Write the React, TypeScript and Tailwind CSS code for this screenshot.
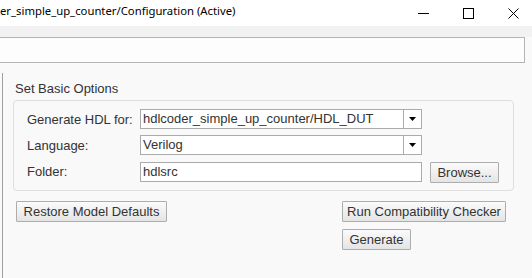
import React from 'react';

// --- Small building blocks ---

const Arrow: React.FC = () => (
  <svg width="7" height="4" viewBox="0 0 7 4" className="block">
    <path d="M0 0h7L3.5 4z" fill="#000" />
  </svg>
);

interface ComboProps {
  value: string;
}

const Combo: React.FC<ComboProps> = ({ value }) => (
  <div className="w-[282px] h-[20px] flex bg-white border border-[#ababab]">
    <div className="flex-1 pl-[2px] leading-[18px] whitespace-nowrap overflow-hidden">{value}</div>
    <div className="w-[18px] border-l border-[#ababab] flex items-center justify-center">
      <Arrow />
    </div>
  </div>
);

interface ButtonProps {
  label: string;
  width: string;
}

const Button: React.FC<ButtonProps> = ({ label, width }) => (
  <div
    className={`${width} h-[21px] flex items-center justify-center border border-[#adadad] rounded-[1px] bg-gradient-to-b from-[#fbfbfb] to-[#e4e4e4] text-[#333] whitespace-nowrap`}
  >
    {label}
  </div>
);

// --- Title bar ---

const TitleBar: React.FC = () => (
  <div className="h-[26px] bg-white flex items-start">
    <div className="flex-1 pt-[3px] text-[11.3px] leading-[16px] text-black whitespace-nowrap font-['Noto_Sans',sans-serif]">
      er_simple_up_counter/Configuration (Active)
    </div>
    <div className="flex mr-[-4px]">
      <div className="w-[45px] h-[26px] flex items-center justify-center">
        <svg width="11" height="10" viewBox="0 0 11 10">
          <path d="M0 5.5h11" stroke="#000" strokeWidth="1" />
        </svg>
      </div>
      <div className="w-[45px] h-[26px] flex items-center justify-center">
        <svg width="11" height="11" viewBox="0 0 11 11">
          <rect x="0.5" y="0.5" width="10" height="10" fill="none" stroke="#000" strokeWidth="1" />
        </svg>
      </div>
      <div className="w-[45px] h-[26px] flex items-center justify-center">
        <svg width="11" height="11" viewBox="0 0 11 11">
          <path d="M0.5 0.5l10 10M10.5 0.5l-10 10" stroke="#000" strokeWidth="1" />
        </svg>
      </div>
    </div>
  </div>
);

// --- Main App ---

const App: React.FC = () => {
  return (
    <div className="w-[532px] h-[278px] overflow-hidden bg-[#f9f9f9] font-['Liberation_Sans',Arial,sans-serif] text-[13px] text-[#333]">
      <TitleBar />

      {/* address strip */}
      <div className="h-[47px] bg-[#f9f9f9]">
        <div className="h-[11px] bg-[#f2f2f2]" />
        <div className="h-[26px] ml-[-2px] mr-[7px] bg-[#fdfdfd] border border-[#b4b4b4]" />
      </div>

      {/* content pane */}
      <div className="ml-[2px] h-[205px] border-l border-[#a0a0a0] pl-[10px] pt-[8px]">
        <div className="leading-[15px] pl-[2px] mb-[4px]">Set Basic Options</div>

        <div className="w-[501px] border border-[#dedede] rounded-[4px] pl-[13px] pt-[8px] pb-[7px]">
          <div className="flex items-center h-[20px]">
            <div className="w-[113px] leading-[15px]">Generate HDL for:</div>
            <Combo value="hdlcoder_simple_up_counter/HDL_DUT" />
          </div>
          <div className="flex items-center h-[20px] mt-[6px]">
            <div className="w-[113px] leading-[15px]">Language:</div>
            <Combo value="Verilog" />
          </div>
          <div className="flex items-start mt-[7px]">
            <div className="w-[113px] leading-[20px]">Folder:</div>
            <div className="w-[282px] h-[20px] bg-white border border-[#ababab] pl-[2px] leading-[18px]">hdlsrc</div>
            <div className="ml-[8px]">
              <Button label="Browse..." width="w-[69px]" />
            </div>
          </div>
        </div>

        <div className="flex mt-[10px] pl-[3px] pr-[26px]">
          <Button label="Restore Model Defaults" width="w-[151px]" />
          <div className="ml-auto flex flex-col items-start gap-[7px]">
            <Button label="Run Compatibility Checker" width="w-[164px]" />
            <Button label="Generate" width="w-[69px]" />
          </div>
        </div>
      </div>
    </div>
  );
};

export default App;
